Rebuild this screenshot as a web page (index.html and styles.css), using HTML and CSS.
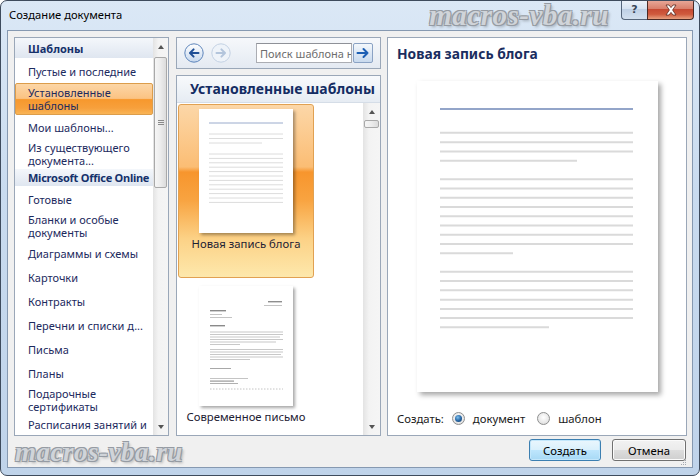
FILE: index.html
```html
<!DOCTYPE html>
<html lang="ru">
<head>
<meta charset="utf-8">
<title>Создание документа</title>
<link rel="stylesheet" href="styles.css">
</head>
<body>
<div class="window">
  <div class="titlebar">
    <span class="title">Создание документа</span>
    <span class="wm wm-top">macros-vba.ru</span>
    <div class="caption-btns">
      <div class="cbtn help">?</div>
      <div class="cbtn close">
        <svg width="14" height="12" viewBox="0 0 14 12"><path d="M2 1h3l2 2.6L9 1h3L8.6 6 12 11H9L7 8.4 5 11H2l3.4-5z" fill="#fff" stroke="#5a2a20" stroke-width="0.8" stroke-linejoin="round"/></svg>
      </div>
    </div>
  </div>
  <div class="client">
    <div class="panes">
      <div class="lbox">
        <div class="list">
          <div class="sec">Шаблоны</div>
          <div class="item">Пустые и последние</div>
          <div class="item sel">Установленные шаблоны</div>
          <div class="item">Мои шаблоны...</div>
          <div class="item">Из существующего документа...</div>
          <div class="sec sec2">Microsoft Office Online</div>
          <div class="item">Готовые</div>
          <div class="item">Бланки и особые документы</div>
          <div class="item">Диаграммы и схемы</div>
          <div class="item">Карточки</div>
          <div class="item">Контракты</div>
          <div class="item nowrap">Перечни и списки д...</div>
          <div class="item">Письма</div>
          <div class="item">Планы</div>
          <div class="item">Подарочные сертификаты</div>
          <div class="item last">Расписания занятий и</div>
        </div>
        <div class="vscroll">
          <div class="sbtn"><span class="tri-up"></span></div>
          <div class="thumb big"><span class="grip"></span></div>
          <div class="sfill"></div>
          <div class="sbtn"><span class="tri-down"></span></div>
        </div>
      </div>

      <div class="mcol">
        <div class="nav">
          <svg class="navbtn" width="20" height="20" viewBox="0 0 20 20"><defs><linearGradient id="gb" x1="0" y1="0" x2="0" y2="1"><stop offset="0" stop-color="#ffffff"/><stop offset="1" stop-color="#c6d8ee"/></linearGradient></defs><circle cx="10" cy="10" r="9.2" fill="url(#gb)" stroke="#5f86bb" stroke-width="1"/><path d="M14.5 10H6.2M9.6 6.4L6 10l3.6 3.6" fill="none" stroke="#1f4f96" stroke-width="2" stroke-linecap="round" stroke-linejoin="round"/></svg>
          <svg class="navbtn fwd" width="20" height="20" viewBox="0 0 20 20"><circle cx="10" cy="10" r="9.2" fill="#eef3f9" stroke="#c3d1e3" stroke-width="1"/><path d="M5.5 10h8.3M10.4 6.4L14 10l-3.6 3.6" fill="none" stroke="#b3c5dc" stroke-width="2" stroke-linecap="round" stroke-linejoin="round"/></svg>
          <input class="search" type="text" placeholder="Поиск шаблона на узле Microsoft Office Online">
          <div class="go"><svg width="14" height="12" viewBox="0 0 14 12"><path d="M1.5 6h10M7.5 2l4 4-4 4" fill="none" stroke="#1d5fb4" stroke-width="2" stroke-linecap="round" stroke-linejoin="round"/></svg></div>
        </div>
        <div class="gallery">
          <div class="ghead">Установленные шаблоны</div>
          <div class="gbody">
            <div class="gitems">
              <div class="gitem sel">
                <div class="page thumb-blog">
                  <svg width="94" height="124" viewBox="0 0 94 124">
                    <line x1="10" y1="14" x2="84" y2="14" stroke="#9aabcc" stroke-width="1"/>
                    <g stroke="#dcdcdc" stroke-width="1">
                      <line x1="10" y1="25" x2="84" y2="25"/><line x1="10" y1="29.5" x2="84" y2="29.5"/><line x1="10" y1="34" x2="63" y2="34"/>
                      <line x1="10" y1="45" x2="84" y2="45"/><line x1="10" y1="49.4" x2="84" y2="49.4"/><line x1="10" y1="53.8" x2="84" y2="53.8"/><line x1="10" y1="58.2" x2="84" y2="58.2"/><line x1="10" y1="62.6" x2="84" y2="62.6"/><line x1="10" y1="67" x2="84" y2="67"/><line x1="10" y1="71.4" x2="84" y2="71.4"/><line x1="10" y1="75.8" x2="84" y2="75.8"/><line x1="10" y1="80.2" x2="84" y2="80.2"/><line x1="10" y1="84.6" x2="84" y2="84.6"/><line x1="10" y1="89" x2="84" y2="89"/><line x1="10" y1="93.4" x2="84" y2="93.4"/>
                    </g>
                  </svg>
                </div>
                <div class="glabel">Новая запись блога</div>
              </div>
              <div class="gitem">
                <div class="page thumb-letter">
                  <svg width="94" height="120" viewBox="0 0 94 120">
                    <rect x="69" y="15" width="14" height="1.4" fill="#8e8e8e"/>
                    <rect x="65" y="19" width="18" height="1" fill="#c4c4c4"/>
                    <rect x="11" y="24" width="16" height="1.4" fill="#8a8a8a"/>
                    <rect x="11" y="28" width="12" height="1" fill="#c4c4c4"/>
                    <rect x="11" y="31" width="22" height="1" fill="#c4c4c4"/>
                    <rect x="11" y="39" width="15" height="1.4" fill="#8a8a8a"/>
                    <g fill="#c8c8c8">
                      <rect x="11" y="45.5" width="73" height="1"/><rect x="11" y="48" width="73" height="1"/><rect x="11" y="50.5" width="70" height="1"/><rect x="11" y="53" width="73" height="1"/><rect x="11" y="55.5" width="66" height="1"/><rect x="11" y="58" width="30" height="1"/>
                      <rect x="11" y="63" width="73" height="1"/><rect x="11" y="65.5" width="73" height="1"/><rect x="11" y="68" width="71" height="1"/><rect x="11" y="70.5" width="73" height="1"/><rect x="11" y="73" width="40" height="1"/>
                    </g>
                    <rect x="11" y="82" width="21" height="1" fill="#a8a8a8"/>
                    <rect x="11" y="92" width="38" height="1" fill="#c4c4c4"/>
                    <rect x="11" y="94.5" width="24" height="1.2" fill="#9a9a9a"/>
                    <rect x="11" y="97" width="28" height="1" fill="#b0b0b0"/>
                    <line x1="11" y1="103" x2="84" y2="103" stroke="#c4c4c4" stroke-width="1" stroke-dasharray="1.5 1.5"/>
                  </svg>
                </div>
                <div class="glabel">Современное письмо</div>
              </div>
            </div>
            <div class="vscroll wide">
              <div class="sbtn"><span class="tri-up"></span></div>
              <div class="thumb small"></div>
              <div class="sfill"></div>
              <div class="sbtn"><span class="tri-down"></span></div>
            </div>
          </div>
        </div>
      </div>

      <div class="rbox">
        <div class="rtitle">Новая запись блога</div>
        <div class="preview page">
          <svg width="241" height="311" viewBox="0 0 241 311">
            <line x1="23" y1="28" x2="216" y2="28" stroke="#93a5c9" stroke-width="2"/>
            <g stroke="#dadada" stroke-width="2">
              <line x1="23" y1="51.7" x2="216" y2="51.7"/><line x1="23" y1="61.2" x2="216" y2="61.2"/><line x1="23" y1="70.6" x2="216" y2="70.6"/><line x1="23" y1="79.8" x2="160" y2="79.8"/>
              <line x1="23" y1="98.3" x2="216" y2="98.3"/><line x1="23" y1="107.4" x2="216" y2="107.4"/><line x1="23" y1="116.7" x2="216" y2="116.7"/><line x1="23" y1="126" x2="216" y2="126"/><line x1="23" y1="135.3" x2="216" y2="135.3"/><line x1="23" y1="144.4" x2="216" y2="144.4"/><line x1="23" y1="153.7" x2="216" y2="153.7"/><line x1="23" y1="163" x2="216" y2="163"/><line x1="23" y1="172.3" x2="96" y2="172.3"/>
              <line x1="23" y1="190.7" x2="216" y2="190.7"/><line x1="23" y1="200" x2="216" y2="200"/><line x1="23" y1="209.3" x2="216" y2="209.3"/><line x1="23" y1="218.7" x2="216" y2="218.7"/><line x1="23" y1="228" x2="216" y2="228"/><line x1="23" y1="237" x2="216" y2="237"/><line x1="23" y1="246.3" x2="132" y2="246.3"/>
            </g>
          </svg>
        </div>
        <div class="radios">
          <span class="rlabel">Создать:</span>
          <span class="radio on"></span><span class="ropt">документ</span>
          <span class="radio r2"></span><span class="ropt">шаблон</span>
        </div>
      </div>
    </div>
    <div class="footer">
      <span class="wm wm-bottom">macros-vba.ru</span>
      <div class="btn default">Создать</div>
      <div class="btn cancel">Отмена</div>
      <svg class="grip-corner" width="6" height="6" viewBox="0 0 6 6"><g fill="#a3a9b1"><rect x="4" y="0" width="1" height="1"/><rect x="2" y="2" width="1" height="1"/><rect x="4" y="2" width="1" height="1"/><rect x="0" y="4" width="1" height="1"/><rect x="2" y="4" width="1" height="1"/><rect x="4" y="4" width="1" height="1"/></g></svg>
    </div>
  </div>
</div>
</body>
</html>
```

FILE: styles.css
```css
* { box-sizing: border-box; margin: 0; padding: 0; }
html, body { width: 700px; height: 476px; overflow: hidden; background: #ffffff; }
body { font-family: "Noto Sans", "Open Sans", sans-serif; font-size: 11px; color: #000; }

.window {
  width: 700px; height: 476px;
  border: 1px solid #3e4b5d;
  border-radius: 7px;
  background: linear-gradient(180deg, #dbe8f6 0%, #c9dbef 40%, #bfd3ea 100%);
  display: flex; flex-direction: column;
  overflow: hidden;
}

.titlebar { height: 29px; display: flex; align-items: flex-start; padding-left: 8px; flex-shrink: 0; }
.title { line-height: 28px; font-size: 11.2px; color: #000; }
.wm {
  font-family: "Liberation Serif", serif; font-style: italic; font-weight: bold;
  color: #d0d4d9; letter-spacing: 0.5px;
  text-shadow: -1px -1px 0 #959ba3, 1px -1px 0 #959ba3, -1px 1px 0 #959ba3, 1px 1px 0 #959ba3, 2px 2px 3px rgba(0,0,0,0.28);
  white-space: nowrap;
}
.wm-top { margin-left: auto; font-size: 29px; line-height: 28px; margin-right: 12px; }
.caption-btns { display: flex; margin-right: 5px; margin-top: -1px; }
.cbtn { height: 20px; display: flex; align-items: center; justify-content: center; }
.help {
  width: 26px; border: 1px solid #55657a; border-top: none; border-right: none;
  border-radius: 0 0 0 4px;
  background: linear-gradient(180deg, #eef3f9 0%, #d7e3f1 45%, #bfd0e5 50%, #d3e0ef 100%);
  font-family: "DejaVu Sans", sans-serif; font-size: 11px; font-weight: bold; color: #3a4656;
}
.close {
  width: 47px; border: 1px solid #4b2a24; border-top: none;
  border-radius: 0 0 4px 0;
  background: linear-gradient(180deg, #e9ab9c 0%, #d9806c 45%, #c74a33 50%, #cf5a3d 75%, #e8a07f 100%);
}

.client {
  flex: 1;
  margin: 0 6px 7px 6px;
  border: 1px solid #8699b1;
  background: #f0f0f0;
  padding: 6px 5px 0 6px;
  display: flex; flex-direction: column;
}
.panes { height: 399px; display: flex; flex-shrink: 0; }

/* left */
.lbox { width: 155px; height: 399px; border: 1px solid #9aa7b8; background: #fff; display: flex; }
.list { flex: 1; overflow: hidden; }
.sec {
  height: 21px; line-height: 21px; padding-left: 13px;
  font-weight: bold; color: #15316b;
  background: linear-gradient(180deg, #f4f7fb 0%, #dfe6f0 100%);
  border-bottom: 1px solid #ffffff;
  white-space: nowrap; overflow: hidden;
}
.sec2 { height: 18px; line-height: 18px; letter-spacing: -0.25px; }
.item {
  min-height: 24px; padding: 2px 4px 2px 13px;
  display: flex; align-items: center;
  line-height: 13px; color: #1c2a5e;
}
.item.nowrap, .item.last { white-space: nowrap; overflow: hidden; }
.item.last { align-items: flex-start; padding-top: 3px; }
.item.sel {
  padding-left: 12px;
  border: 1px solid #dc9d4b; border-radius: 2px;
  background: linear-gradient(180deg, #fcd6a6 0%, #fbc383 48%, #f7982d 52%, #f7a03c 80%, #f9b556 100%);
}

.vscroll {
  width: 15px; flex-shrink: 0;
  background: linear-gradient(90deg, #e3e3e3 0%, #f3f3f3 35%, #f5f5f5 100%);
  display: flex; flex-direction: column; align-items: center;
}
.vscroll.wide { width: 17px; }
.sbtn { height: 17px; width: 100%; display: flex; align-items: center; justify-content: center; flex-shrink: 0; }
.tri-up { width: 0; height: 0; border-left: 3.5px solid transparent; border-right: 3.5px solid transparent; border-bottom: 4px solid #555; }
.tri-down { width: 0; height: 0; border-left: 3.5px solid transparent; border-right: 3.5px solid transparent; border-top: 4px solid #555; }
.thumb {
  width: 13px; flex-shrink: 0;
  border: 1px solid #a9a9a9; border-radius: 2px;
  background: linear-gradient(90deg, #f6f6f6 0%, #ececec 50%, #dcdcdc 100%);
  display: flex; align-items: center; justify-content: center;
}
.thumb.big { height: 131px; margin-top: 2px; }
.thumb.small { width: 15px; height: 8px; }
.grip { width: 6px; height: 5px; border-top: 1px solid #8a8a8a; border-bottom: 1px solid #8a8a8a; }
.grip::after { content: ""; display: block; margin-top: 1px; height: 1px; background: #8a8a8a; }
.sfill { flex: 1; }

/* middle */
.mcol { width: 205px; margin-left: 7px; display: flex; flex-direction: column; }
.nav {
  height: 32px; flex-shrink: 0;
  border: 1px solid #9aa7b8;
  background: linear-gradient(180deg, #f6f8fb 0%, #e4eaf2 100%);
  display: flex; align-items: center; padding-left: 7px;
}
.navbtn { display: block; flex-shrink: 0; }
.navbtn.fwd { margin-left: 7px; }
.search {
  margin-left: 25px; width: 96px; height: 20px;
  border: 1px solid #abadb3; border-top-color: #8e9198;
  background: #fff; color: #6d6d6d; outline: none;
  font-family: inherit; font-size: 11px;
  padding: 0 0 0 3px;
}
.search::placeholder { color: #6d6d6d; opacity: 1; }
.go {
  width: 20px; height: 20px; margin-left: 1px;
  border: 1px solid #8aa2c4; border-radius: 2px;
  background: linear-gradient(180deg, #f4f8fc 0%, #dde8f5 50%, #c9daee 100%);
  display: flex; align-items: center; justify-content: center;
}
.gallery { flex: 1; margin-top: 6px; border: 1px solid #9aa7b8; background: #fff; display: flex; flex-direction: column; }
.ghead {
  height: 27px; flex-shrink: 0; line-height: 26px; padding-left: 13px;
  font-size: 14px; font-weight: bold; color: #142c63;
  background: linear-gradient(180deg, #f8fafc 0%, #e6ecf3 100%);
  border-bottom: 1px solid #d5dde7;
  white-space: nowrap; overflow: hidden;
}
.gbody { flex: 1; display: flex; overflow: hidden; }
.gitems { flex: 1; padding: 1px 0 0 1px; overflow: hidden; }
.gitem {
  width: 136px; border: 1px solid transparent; border-radius: 3px;
  padding-top: 4px; margin-bottom: 3px;
  display: flex; flex-direction: column; align-items: center;
}
.gitem.sel {
  height: 174px;
  border-color: #e1a152;
  background: linear-gradient(180deg, #fcd7a8 0%, #fbbd74 36%, #f7952d 39%, #f8a340 55%, #fcd287 78%, #fde8ac 100%);
}
.page { background: #fff; box-shadow: 2px 2px 3px rgba(0,0,0,0.35); }
.page svg { display: block; }
.thumb-blog { width: 94px; height: 124px; }
.thumb-letter { width: 94px; height: 120px; }
.glabel { margin-top: 4px; line-height: 14px; font-size: 11.3px; color: #1d2133; white-space: nowrap; }

/* right */
.rbox {
  width: 300px; margin-left: 6px;
  border: 1px solid #9aa7b8; background: #fff;
  display: flex; flex-direction: column; align-items: center;
  padding: 7px 0 7px 0;
}
.rtitle { align-self: stretch; padding-left: 9px; font-size: 13.8px; font-weight: bold; color: #1a2d60; line-height: 18px; }
.preview { width: 241px; height: 311px; margin-top: 18px; box-shadow: 3px 3px 5px rgba(0,0,0,0.35); }
.radios { align-self: stretch; margin-top: 18px; padding-left: 9px; display: flex; align-items: center; height: 16px; color: #1a1a1a; font-size: 11.3px; }
.radio {
  width: 13px; height: 13px; border-radius: 50%; flex-shrink: 0;
  border: 1px solid #8e8f8f;
  background: radial-gradient(circle at 50% 40%, #ffffff 0%, #e8e8e8 60%, #d2d2d2 100%);
  display: flex; align-items: center; justify-content: center;
  margin-left: 8px;
}
.radio.on::after {
  content: ""; width: 7px; height: 7px; border-radius: 50%;
  background: radial-gradient(circle at 40% 35%, #7ec0ee 0%, #2a6aa8 50%, #0f355f 100%);
}
.radio.r2 { margin-left: 12px; }
.ropt { margin-left: 8px; }

/* footer */
.footer { flex: 1; display: flex; align-items: flex-start; padding-top: 3px; }
.wm-bottom { font-size: 27px; line-height: 26px; margin-left: 1px; margin-top: 0; }
.btn {
  height: 22px; display: flex; align-items: center; justify-content: center;
  border: 1px solid #707070; border-radius: 3px; color: #000; font-size: 11.3px;
}
.btn.default {
  margin-left: auto; width: 72px;
  border-color: #3c7fb1;
  background: linear-gradient(180deg, #eaf6fd 0%, #d9f0fc 50%, #bee6fd 50%, #a7d9f5 100%);
  box-shadow: inset 0 0 0 1px #c3e7fb;
}
.btn.cancel {
  margin-left: 11px; width: 74px;
  background: linear-gradient(180deg, #f2f2f2 0%, #ebebeb 50%, #dddddd 50%, #cfcfcf 100%);
  box-shadow: inset 0 0 0 1px #fbfbfb;
}
.grip-corner { margin-left: -5px; margin-top: 21px; margin-right: 0; flex-shrink: 0; }
```
